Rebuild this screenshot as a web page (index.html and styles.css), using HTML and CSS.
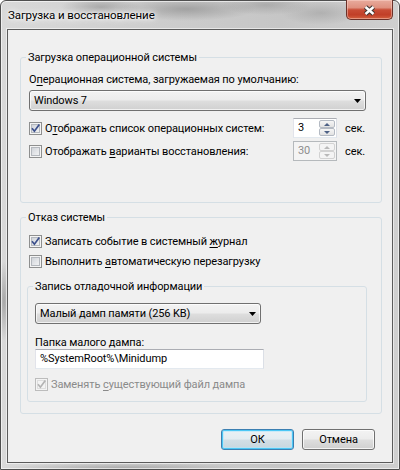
FILE: index.html
```html
<!DOCTYPE html>
<html lang="ru">
<head>
<meta charset="utf-8">
<title>Загрузка и восстановление</title>
<link rel="stylesheet" href="styles.css">
</head>
<body>
<div class="window">
  <div class="titlebar">
    <span class="title">Загрузка и восстановление</span>
    <div class="close">
      <svg width="13" height="11" viewBox="0 0 13 11"><path class="x-out" d="M2.5 2 L10.5 9 M10.5 2 L2.5 9"/><path class="x-in" d="M2.5 2 L10.5 9 M10.5 2 L2.5 9"/></svg>
    </div>
  </div>
  <div class="client">
    <fieldset class="group g1">
      <legend>Загрузка операционной системы</legend>
      <div class="label">О<u>п</u>ерационная система, загружаемая по умолчанию:</div>
      <div class="combo combo-wide"><span class="combo-text">Windows 7</span><svg class="arrow" width="7" height="4" viewBox="0 0 7 4"><path d="M0 0H7L3.5 4Z"/></svg></div>
      <div class="row r1">
        <div class="check"><span class="cb"><svg width="11" height="11" viewBox="0 0 11 11"><path class="tick" d="M2 5.3 L4.4 8.2 L9.3 1.6"/></svg></span><span class="ctext">О<u>т</u>ображать список операционных систем:</span></div>
        <div class="spin"><span class="val">3</span><span class="sbtns"><span class="sb up"></span><span class="sb down"></span></span></div>
        <span class="unit">сек.</span>
      </div>
      <div class="row r2">
        <div class="check"><span class="cb"></span><span class="ctext">Отображать <u>в</u>арианты восстановления:</span></div>
        <div class="spin spin-dis"><span class="val">30</span><span class="sbtns"><span class="sb up"></span><span class="sb down"></span></span></div>
        <span class="unit">сек.</span>
      </div>
    </fieldset>

    <fieldset class="group g2">
      <legend>Отказ системы</legend>
      <div class="check line ca"><span class="cb"><svg width="11" height="11" viewBox="0 0 11 11"><path class="tick" d="M2 5.3 L4.4 8.2 L9.3 1.6"/></svg></span><span class="ctext">Записать событие в системный <u>ж</u>урнал</span></div>
      <div class="check line cb-2"><span class="cb"></span><span class="ctext">Выполнить <u>а</u>втоматическую перезагрузку</span></div>

      <fieldset class="group g3">
        <legend>Запись отладочной информации</legend>
        <div class="combo combo-narrow"><span class="combo-text">Малый дамп памяти (256 KB)</span><svg class="arrow" width="7" height="4" viewBox="0 0 7 4"><path d="M0 0H7L3.5 4Z"/></svg></div>
        <div class="label label-small">Папка малого дампа:</div>
        <div class="input">%SystemRoot%\Minidump</div>
        <div class="check line disabled cc"><span class="cb"><svg width="11" height="11" viewBox="0 0 11 11"><path class="tick" d="M2 5.3 L4.4 8.2 L9.3 1.6"/></svg></span><span class="ctext">Заменять <u>с</u>уществующий файл дампа</span></div>
      </fieldset>
    </fieldset>

    <div class="buttons">
      <button class="btn btn-default">ОК</button>
      <button class="btn">Отмена</button>
    </div>
  </div>
</div>
</body>
</html>
```
FILE: styles.css
```css
* { box-sizing: border-box; }

html, body { margin: 0; padding: 0; }

body {
  width: 400px;
  height: 470px;
  overflow: hidden;
  background: #ffffff;
  font-family: Roboto, "Noto Sans", "Liberation Sans", sans-serif;
  font-size: 11px;
  line-height: 15px;
  letter-spacing: -0.1px;
  color: #000;
}

u { text-decoration: underline; text-underline-offset: 2px; text-decoration-thickness: 1px; }

/* ---------- window frame ---------- */
.window {
  width: 400px;
  height: 470px;
  border: 1px solid #4f4f4f;
  border-radius: 6px 6px 0 0;
  padding: 0 6px 6px;
  display: flex;
  flex-direction: column;
  box-shadow: inset 0 0 0 1px rgba(255,255,255,0.6);
  background:
    radial-gradient(ellipse 40px 10px at 100px 6px, rgba(120,120,120,0.45), rgba(120,120,120,0)),
    radial-gradient(ellipse 70px 12px at 185px 8px, rgba(110,110,110,0.45), rgba(110,110,110,0)),
    radial-gradient(ellipse 45px 10px at 265px 4px, rgba(120,120,120,0.35), rgba(120,120,120,0)),
    radial-gradient(ellipse 40px 12px at 320px 12px, rgba(120,120,120,0.3), rgba(120,120,120,0)),
    radial-gradient(ellipse 6px 40px at 3px 300px, rgba(90,90,90,0.4), rgba(90,90,90,0)),
    radial-gradient(ellipse 120px 5px at 120px 467px, rgba(100,100,100,0.35), rgba(100,100,100,0)),
    linear-gradient(90deg, #d9d9d9 0%, #cdcdcd 40%, #c6c6c6 70%, #cfcfcf 100%);
}

.titlebar {
  height: 28px;
  display: flex;
  align-items: flex-start;
  flex: none;
}

.title {
  margin-top: 7px;
  padding-left: 1px;
  font-size: 11.5px;
  color: #000;
  text-shadow: 0 0 6px #ffffff, 0 0 3px #ffffff, 0 0 10px rgba(255,255,255,0.9);
}

.close {
  margin-left: auto;
  margin-top: -1px;
  width: 47px;
  height: 20px;
  border: 1px solid #6b3129;
  border-top: none;
  border-radius: 0 0 5px 5px;
  background: linear-gradient(#e8ab9d 0%, #df917f 40%, #c84c35 52%, #c13f28 78%, #d4613f 100%);
  box-shadow: inset 0 0 0 1px rgba(255,220,210,0.45);
  display: flex;
  align-items: center;
  justify-content: center;
}

.close svg { display: block; margin-top: 1px; }
.x-out { stroke: #3d3634; stroke-width: 4.6; fill: none; }
.x-in { stroke: #ffffff; stroke-width: 2.4; fill: none; }

/* ---------- client area ---------- */
.client {
  flex: 1;
  border: 1px solid #5b5b5b;
  background: #f0f0f0;
  display: flex;
  flex-direction: column;
  box-shadow: 0 0 0 1px rgba(255,255,255,0.55);
}

.group {
  margin: 0;
  border: 1px solid #d5dfe5;
  border-radius: 3px;
  min-width: 0;
}

.group legend {
  padding: 0 2px;
  margin-left: -3px;
  line-height: 15px;
}

.g1 {
  width: 362px;
  margin: 20px 0 0 12px;
  padding: 7px 15px 41px 8px;
}

.g2 {
  width: 362px;
  margin: 7px 0 0 12px;
  padding: 9px 15px 0 8px;
}

.g3 {
  width: 340px;
  margin: 10px 0 11px -2px;
  padding: 9px 8px 9px 7px;
}

.g3 legend { margin-left: -2px; }

.label { line-height: 15px; }

.label-small {
  margin-top: 12px;
  line-height: 13px;
}

/* ---------- combo ---------- */
.combo {
  height: 21px;
  border: 1px solid #707070;
  border-radius: 3px;
  background: linear-gradient(#f3f3f3 0%, #ececec 48%, #dedede 52%, #d0d0d0 100%);
  box-shadow: inset 0 0 0 1px rgba(255,255,255,0.7);
  display: flex;
  align-items: center;
  padding: 0 4px 0 4px;
}

.combo-wide { margin-top: 3px; }
.combo-narrow { width: 226px; }

.combo-text { flex: 1; line-height: 15px; }

.arrow { display: block; flex: none; fill: #000; }

/* ---------- rows ---------- */
.row {
  display: flex;
  align-items: center;
  height: 20px;
}

.r1 { margin-top: 7px; }
.r2 { margin-top: 3px; }

.check {
  display: flex;
  align-items: center;
  flex: 1;
}

.check.line { height: 15px; }

.ca { margin-top: 0; }
.cb-2 { margin-top: 5px; }
.cc { margin-top: 8px; }

.cb {
  flex: none;
  width: 13px;
  height: 13px;
  border: 1px solid #8e8f8f;
  background: linear-gradient(135deg, #c6cad1 0%, #e4e6e9 55%, #f7f7f7 100%);
  box-shadow: inset 0 0 0 1px #f4f4f4, inset 0 0 0 2px #b4b8be;
  margin-right: 3px;
}

.cb svg { display: block; }

.tick {
  fill: none;
  stroke: #3b4f8c;
  stroke-width: 1.7;
  stroke-linejoin: miter;
}

.disabled { color: #8a8a8a; }
.disabled .cb {
  border-color: #bcbcbc;
  background: #f4f4f4;
  box-shadow: inset 0 0 0 1px #f4f4f4, inset 0 0 0 2px #dedede;
}
.disabled .tick { stroke: #b3b3b3; }

.ctext { line-height: 15px; white-space: nowrap; }

/* ---------- spinner ---------- */
.spin {
  flex: none;
  width: 44px;
  height: 20px;
  border: 1px solid;
  border-color: #abadb3 #dbdfe6 #e3e9ef #e2e3ea;
  background: #fff;
  display: flex;
  padding: 1px 1px 1px 0;
}

.val {
  flex: 1;
  padding-left: 4px;
  line-height: 16px;
}

.sbtns {
  width: 16px;
  display: flex;
  flex-direction: column;
}

.sb {
  flex: 1;
  border: 1px solid #b4bac3;
  border-radius: 2px;
  background: linear-gradient(#f6f6f6, #e2e2e2);
  display: flex;
  align-items: center;
  justify-content: center;
}

.sb.up::before {
  content: "";
  border-left: 3px solid transparent;
  border-right: 3px solid transparent;
  border-bottom: 3px solid #4d6185;
}

.sb.down::before {
  content: "";
  border-left: 3px solid transparent;
  border-right: 3px solid transparent;
  border-top: 3px solid #4d6185;
}

.spin-dis {
  border-color: #b5b9bc;
  background: #f4f4f4;
  color: #8d8d8d;
}

.spin-dis .sb {
  border-color: #d2d2d2;
  background: #f4f4f4;
}
.spin-dis .sb.up::before { border-bottom-color: #b9b9b9; }
.spin-dis .sb.down::before { border-top-color: #b9b9b9; }

.unit {
  flex: none;
  width: 21px;
  margin-left: 8px;
  line-height: 15px;
}

/* ---------- text input ---------- */
.input {
  width: 229px;
  height: 20px;
  border: 1px solid;
  border-color: #abadb3 #dbdfe6 #e3e9ef #e2e3ea;
  background: #fff;
  padding-left: 4px;
  line-height: 18px;
}

/* ---------- buttons ---------- */
.buttons {
  display: flex;
  justify-content: flex-end;
  gap: 8px;
  margin-top: 15px;
  padding-right: 17px;
}

.btn {
  width: 73px;
  height: 21px;
  padding: 0;
  font-family: inherit;
  font-size: 11px;
  letter-spacing: -0.1px;
  color: #000;
  border: 1px solid #707070;
  border-radius: 3px;
  background: linear-gradient(#f3f3f3 0%, #ececec 48%, #dedede 52%, #d0d0d0 100%);
  box-shadow: inset 0 0 0 1px rgba(255,255,255,0.75);
}

.btn-default {
  border-color: #3c7fb1;
  background: linear-gradient(#eaf1f5 0%, #e3ecf1 48%, #d2dfe6 52%, #c7d6de 100%);
  box-shadow: inset 0 0 0 1px #4cc7f5, inset 0 0 0 2px rgba(180,230,250,0.6);
}
```
